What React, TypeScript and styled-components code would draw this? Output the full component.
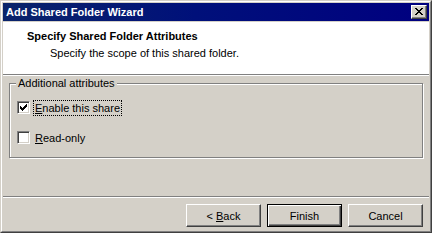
import styled, { createGlobalStyle } from "styled-components";

const GlobalStyle = createGlobalStyle`
  html, body {
    margin: 0;
    padding: 0;
    background: #d4d0c8;
  }
  * {
    box-sizing: border-box;
  }
`;

const Window = styled.div`
  width: 432px;
  height: 233px;
  border: 1px solid;
  border-color: #d4d0c8 #404040 #404040 #d4d0c8;
  font-family: "Liberation Sans", Arial, sans-serif;
  font-size: 11px;
  color: #000;
`;

const Frame = styled.div`
  height: 100%;
  border: 1px solid;
  border-color: #fff #808080 #808080 #fff;
  padding: 1px;
  background: #d4d0c8;
  display: flex;
  flex-direction: column;
`;

const TitleBar = styled.div`
  height: 18px;
  flex: none;
  display: flex;
  align-items: center;
  justify-content: space-between;
  padding: 0 2px 0 3px;
  background: linear-gradient(to right, #0a246a 0%, #00107a 45%, #000080 100%);
`;

const TitleText = styled.span`
  color: #fff;
  font-weight: bold;
  font-size: 11px;
  line-height: 13px;
`;

const CaptionButton = styled.button`
  width: 16px;
  height: 14px;
  margin: 0;
  border: 1px solid;
  border-color: #fff #404040 #404040 #fff;
  box-shadow: inset -1px -1px 0 #808080;
  background: #d4d0c8;
  display: flex;
  align-items: center;
  justify-content: center;
  padding: 0 0 1px 0;
`;

const Header = styled.div`
  margin-top: 1px;
  height: 52px;
  flex: none;
  background: #fff;
  padding: 8px 0 0 24px;
`;

const HeaderTitle = styled.div`
  font-weight: bold;
  line-height: 13px;
`;

const HeaderSub = styled.div`
  margin: 4px 0 0 23px;
  line-height: 13px;
`;

const Separator = styled.div`
  height: 2px;
  flex: none;
  border-top: 1px solid #808080;
  border-bottom: 1px solid #fff;
`;

const Content = styled.div`
  flex: 1;
  padding: 7px 6px 0 6px;
`;

const GroupBox = styled.div`
  position: relative;
  height: 75px;
  border: 1px solid #808080;
  box-shadow: inset 1px 1px 0 #fff, 1px 1px 0 #fff;
  padding: 15px 0 0 7px;
  display: flex;
  flex-direction: column;
  gap: 13px;
`;

const Legend = styled.span`
  position: absolute;
  top: -7px;
  left: 6px;
  padding: 0 2px;
  background: #d4d0c8;
  line-height: 13px;
`;

const CheckRow = styled.label`
  height: 17px;
  display: flex;
  align-items: center;
`;

const CheckBox = styled.span`
  width: 13px;
  height: 13px;
  flex: none;
  background: #fff;
  border: 1px solid;
  border-color: #808080 #fff #fff #808080;
  box-shadow: inset 1px 1px 0 #404040, inset -1px -1px 0 #d4d0c8;
  display: flex;
  padding: 2px 0 0 2px;
`;

const CheckLabel = styled.span<{ $focused?: boolean }>`
  margin-left: 3px;
  padding: 0 1px;
  line-height: 14px;
  border: 1px dotted ${(p) => (p.$focused ? "#000" : "transparent")};
`;

const Key = styled.span`
  text-decoration: underline;
`;

const Footer = styled.div`
  flex: none;
  display: flex;
  justify-content: flex-end;
  gap: 6px;
  padding: 6px 6px 3px 0;
`;

const Button = styled.button<{ $default?: boolean }>`
  width: 75px;
  height: 23px;
  margin: 0;
  padding: 0;
  font-family: "Liberation Sans", Arial, sans-serif;
  font-size: 11px;
  color: #000;
  background: #d4d0c8;
  border: 1px solid;
  border-color: ${(p) => (p.$default ? "#000" : "#fff #404040 #404040 #fff")};
  box-shadow: ${(p) =>
    p.$default
      ? "inset 1px 1px 0 #fff, inset -1px -1px 0 #404040, inset -2px -2px 0 #808080"
      : "inset -1px -1px 0 #808080"};
`;

const closeGlyph = [
  [0, 0, 2], [6, 0, 2],
  [1, 1, 2], [5, 1, 2],
  [2, 2, 4],
  [3, 3, 2],
  [2, 4, 4],
  [1, 5, 2], [5, 5, 2],
  [0, 6, 2], [6, 6, 2],
];

const checkGlyph = [
  [6, 0, 1],
  [5, 1, 2],
  [0, 2, 1], [4, 2, 3],
  [0, 3, 2], [3, 3, 3],
  [0, 4, 5],
  [1, 5, 3],
  [2, 6, 1],
];

function PixelGlyph({ rows, w, h }: { rows: number[][]; w: number; h: number }) {
  return (
    <svg width={w} height={h} viewBox={`0 0 ${w} ${h}`} shapeRendering="crispEdges">
      {rows.map(([x, y, len], i) => (
        <rect key={i} x={x} y={y} width={len} height={1} fill="#000" />
      ))}
    </svg>
  );
}

export default function App() {
  return (
    <>
      <GlobalStyle />
      <Window>
        <Frame>
          <TitleBar>
            <TitleText>Add Shared Folder Wizard</TitleText>
            <CaptionButton aria-label="Close">
              <PixelGlyph rows={closeGlyph} w={8} h={7} />
            </CaptionButton>
          </TitleBar>
          <Header>
            <HeaderTitle>Specify Shared Folder Attributes</HeaderTitle>
            <HeaderSub>Specify the scope of this shared folder.</HeaderSub>
          </Header>
          <Separator />
          <Content>
            <GroupBox>
              <Legend>Additional attributes</Legend>
              <CheckRow>
                <CheckBox>
                  <PixelGlyph rows={checkGlyph} w={7} h={7} />
                </CheckBox>
                <CheckLabel $focused>
                  <Key>E</Key>nable this share
                </CheckLabel>
              </CheckRow>
              <CheckRow>
                <CheckBox />
                <CheckLabel>
                  <Key>R</Key>ead-only
                </CheckLabel>
              </CheckRow>
            </GroupBox>
          </Content>
          <Separator />
          <Footer>
            <Button>
              &lt; <Key>B</Key>ack
            </Button>
            <Button $default>Finish</Button>
            <Button>Cancel</Button>
          </Footer>
        </Frame>
      </Window>
    </>
  );
}
